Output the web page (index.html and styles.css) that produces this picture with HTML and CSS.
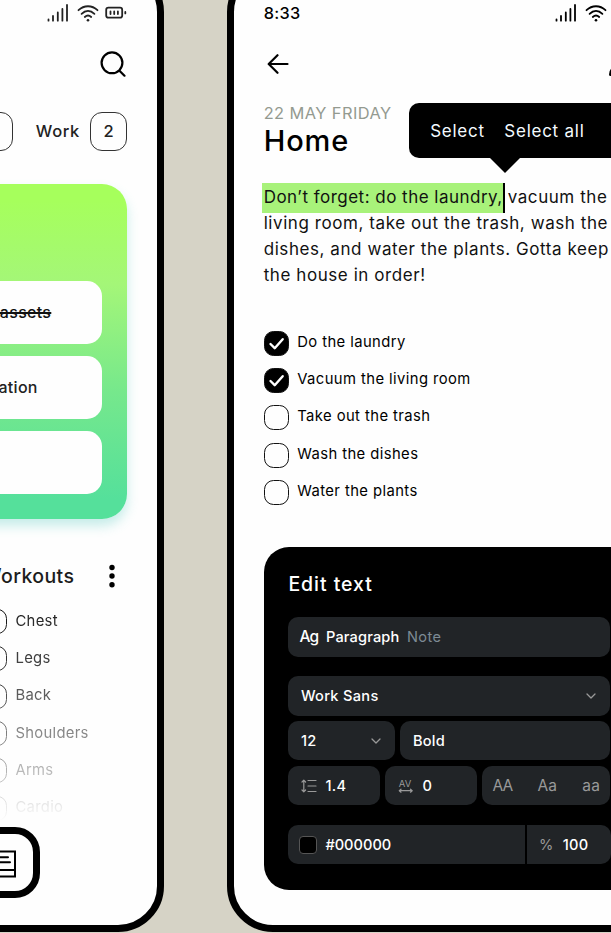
FILE: index.html
```
<!DOCTYPE html>
<html lang="en">
<head>
<meta charset="utf-8">
<title>Notes</title>
<link rel="stylesheet" href="styles.css">
</head>
<body>
<main class="stage">
  <section class="phone phone-home">
    <div class="status">
      <svg class="signal" viewBox="0 0 22 18"><path d="M1.5 15.5v1.2M6 12v4.7M10.800 8.500v8.200M15.400 5v11.700M20 1v15.700"/></svg>
      <svg class="wifi" viewBox="0 0 22 18"><path d="M1.5 6.2C7 .9 15 .9 20.500 6.200M4.600 9.800C8.500 6 13.500 6 17.400 9.800M7.800 13C9.800 11.200 12.200 11.200 14.200 13"/><circle cx="11" cy="16.200" r="1.300"/></svg>
      <svg class="battery" viewBox="0 0 22 18"><rect x="1.200" y="3.700" width="16" height="10" rx="2.200"/><path d="M5.500 7.500v2.500M9.200 7.500v2.500M12.900 7.500v2.500M20.300 8v1.400"/></svg>
    </div>
    <div class="toolbar toolbar-end">
      <svg class="search" viewBox="0 0 26 26"><circle cx="12" cy="11.800" r="10.400"/><path d="M19.500 19.700l5 5"/></svg>
    </div>
    <div class="tabs">
      <span class="badge"></span>
      <span class="tab-name">Work</span>
      <span class="badge">2</span>
    </div>
    <div class="card">
      <div class="card-item done"><span>assets</span></div>
      <div class="card-item next"><span>ation</span></div>
      <div class="card-item"></div>
    </div>
    <div class="list-head"><h2>Workouts</h2>
      <svg class="dots" viewBox="0 0 6 26"><circle cx="3" cy="4.500" r="2.700"/><circle cx="3" cy="13" r="2.700"/><circle cx="3" cy="21.700" r="2.700"/></svg>
    </div>
    <ul class="checks checks-fade">
      <li><i class="box"></i><span>Chest</span></li>
      <li><i class="box"></i><span>Legs</span></li>
      <li><i class="box"></i><span>Back</span></li>
      <li><i class="box"></i><span>Shoulders</span></li>
      <li><i class="box"></i><span>Arms</span></li>
      <li><i class="box"></i><span>Cardio</span></li>
    </ul>
    <div class="nav">
      <svg class="news" viewBox="0 0 34 28"><path d="M1 1.500h31v25H1zM1 20h31M8 7.200h17M8 12.300h19"/></svg>
    </div>
  </section>

  <section class="phone phone-note">
    <div class="status status-note">
      <span class="clock">8:33</span>
      <svg class="signal" viewBox="0 0 22 18"><path d="M1.500 15.500v1.200M6 12v4.700M10.800 8.500v8.200M15.400 5v11.700M20 1v15.700"/></svg>
      <svg class="wifi" viewBox="0 0 22 18"><path d="M1.500 6.200C7 .9 15 .9 20.500 6.200M4.600 9.800C8.500 6 13.500 6 17.400 9.800M7.800 13C9.800 11.200 12.200 11.200 14.200 13"/><circle cx="11" cy="16.200" r="1.300"/></svg>
    </div>
    <div class="toolbar">
      <svg class="back" viewBox="0 0 22 20"><path d="M20.500 10H2M10.500 1.200L1.700 10l8.800 8.800"/></svg>
      <svg class="person" viewBox="0 0 10 12"><path d="M1.500 9.500C1.500 6 4 3 9 2"/></svg>
    </div>
    <p class="date">22 MAY FRIDAY</p>
    <h1>Home</h1>
    <div class="popover"><span>Select</span><span>Select all</span></div>
    <p class="note">
      <span class="line"><mark>Don’t forget: do the laundry,</mark><span class="rest">vacuum the</span></span>
      <span class="line">living room, take out the trash, wash the</span>
      <span class="line">dishes, and water the plants. Gotta keep</span>
      <span class="line">the house in order!</span>
    </p>
    <ul class="checks checks-note">
      <li><i class="box on"><svg viewBox="0 0 25 25"><path d="M6.500 13l4.200 4.200 8-9"/></svg></i><span>Do the laundry</span></li>
      <li><i class="box on"><svg viewBox="0 0 25 25"><path d="M6.500 13l4.200 4.200 8-9"/></svg></i><span>Vacuum the living room</span></li>
      <li><i class="box"></i><span>Take out the trash</span></li>
      <li><i class="box"></i><span>Wash the dishes</span></li>
      <li><i class="box"></i><span>Water the plants</span></li>
    </ul>
    <div class="panel">
      <h2>Edit text</h2>
      <div class="field style"><span class="ag">Ag</span><span class="para">Paragraph</span><span class="dim">Note</span></div>
      <div class="rows">
        <div class="field"><span>Work Sans</span><svg class="chev" viewBox="0 0 10 6"><path d="M1 1l4 4 4-4"/></svg></div>
        <div class="row two">
          <div class="field"><span>12</span><svg class="chev" viewBox="0 0 10 6"><path d="M1 1l4 4 4-4"/></svg></div>
          <div class="field"><span>Bold</span></div>
        </div>
        <div class="row three">
          <div class="field metric"><svg class="leading" viewBox="0 0 16 14"><path d="M2.800 1.500v11M1 3l1.800-1.800L4.600 3M1 11l1.800 1.800L4.600 11M7 1.500h8M7 7h8M7 12.500h8"/></svg><span>1.4</span></div>
          <div class="field metric"><svg class="tracking" viewBox="0 0 16 14"><text x="0.800" y="8">AV</text><path d="M1.500 11.700h12.500M3 10.200l-1.700 1.500L3 13.200M12.500 10.200l1.700 1.500L12.500 13.200"/></svg><span>0</span></div>
          <div class="field cases"><span class="upper">AA</span><span>Aa</span><span>aa</span></div>
        </div>
      </div>
      <div class="row color">
        <div class="field hex"><i class="swatch"></i><span>#000000</span></div>
        <div class="field alpha"><span class="pct">%</span><span>100</span></div>
      </div>
    </div>
  </section>
</main>
</body>
</html>
```

FILE: styles.css
```
* { box-sizing: border-box; margin: 0; padding: 0; }
html { overflow: hidden; }
body {
  width: 611px;
  height: 933px;
  overflow: hidden;
  background: #d6d3c6;
  color: #000;
  font-family: Inter, "Liberation Sans", sans-serif;
}
h1, h2 { font-weight: 500; }
ul { list-style: none; }
svg { display: block; flex: none; fill: none; stroke: currentColor; stroke-linecap: round; stroke-linejoin: round; }
span { white-space: nowrap; }

.stage { display: flex; gap: 62.400px; width: 611px; height: 933px; overflow: hidden; }
.phone {
  flex: none;
  height: 965.500px;
  margin-top: -34px;
  padding-top: 27px;
  border: 7px solid #000;
  border-radius: 46px;
  background: #fefefe;
}
.phone-home { width: 224.300px; margin-left: -60px; padding-left: 33px; padding-right: 30px; }
.phone-note { width: 460px; padding-left: 30px; position: relative; }

.status { display: flex; justify-content: flex-end; align-items: center; height: 26.500px; color: #222; }
.status svg { width: 22px; height: 18px; stroke-width: 1.800; }
.status .signal { margin-right: 8px; }
.wifi circle { fill: currentColor; stroke: none; }
.phone-home .wifi { margin-right: 6.500px; }
.status-note { justify-content: flex-start; color: #000; }
.clock { width: 291.500px; font-size: 16.300px; letter-spacing: .3px; font-weight: 500; }
.toolbar { display: flex; align-items: center; height: 47px; margin-top: 13.500px; }
.toolbar-end { justify-content: flex-end; padding-right: 1.500px; }
.search { width: 26px; height: 26px; stroke-width: 2.200; }
.back { width: 22px; height: 20px; margin-left: 3px; stroke-width: 2.200; }
.person { width: 10px; height: 12px; margin-left: 320px; margin-top: 15px; stroke-width: 3; }

.tabs { display: flex; align-items: center; justify-content: flex-end; margin-top: 25px; height: 38.500px; color: #222; font-weight: 500; font-size: 16.500px; }
.badge { display: flex; align-items: center; justify-content: center; width: 37.500px; height: 38.500px; border: 1.300px solid #333; border-radius: 12px; flex: none; }
.tab-name { margin: 0 10px 0 23px; width: 44px; letter-spacing: .65px; }

.card {
  display: flex;
  flex-direction: column;
  gap: 12.300px;
  height: 334.500px;
  margin-top: 33.500px;
  margin-left: -20px;
  padding: 97px 25px 0 0;
  border-radius: 25px;
  background: linear-gradient(#a6ff5c 5%, #a4f678 30%, #76e88c 62%, #55e09b 94%);
  box-shadow: 0 7px 12px rgba(80, 200, 190, .32);
}
.card-item { display: flex; align-items: center; justify-content: flex-end; height: 62.700px; border-radius: 15px; background: #fefefe; font-size: 16px; font-weight: 500; letter-spacing: .3px; color: #222; flex: none; }
.done { padding-right: 51px; color: #111; }
.done span { text-decoration: line-through; text-decoration-thickness: 2px; }
.next { padding-right: 64.500px; }

.list-head { display: flex; justify-content: space-between; align-items: center; height: 30px; margin-top: 42px; padding-right: 12px; }
.list-head h2 { margin-left: 2px; font-size: 19.500px; letter-spacing: .4px; color: #1c1c1c; }
.dots { width: 6px; height: 26px; fill: #000; stroke: none; }

.checks { display: flex; flex-direction: column; gap: 12.100px; font-size: 14.800px; letter-spacing: .42px; }
.checks li { display: flex; align-items: center; gap: 8.500px; height: 25.200px; }
.checks li span { position: relative; top: -1.500px; }
.box { display: block; width: 25px; height: 25px; border: 1.300px solid #111; border-radius: 9.500px; flex: none; }
.on { background: #000; }
.on svg { width: 25px; height: 25px; margin: -1px; stroke: #fff; stroke-width: 2.400; }
.checks-fade {
  margin: 18.500px 0 0 2px;
  letter-spacing: .3px;
  color: #222;
  mask-image: linear-gradient(#000 0, rgba(0,0,0,.8) 35%, rgba(0,0,0,.5) 62%, rgba(0,0,0,0) 100%);
}
.checks-fade li span { top: -.7px; }
.checks-note { margin-top: 42.900px; }

.nav { display: flex; justify-content: flex-end; align-items: center; width: 79.500px; height: 70.500px; margin: 6.800px 0 0 -20px; padding-right: 15.500px; border: 7px solid #000; border-radius: 25px; }
.news { width: 34px; height: 28px; stroke-width: 2; stroke-linejoin: miter; margin-top: 3px; }

.date { height: 20px; margin-top: 17px; line-height: 19px; font-size: 16.400px; letter-spacing: .42px; color: #949a90; }
h1 { height: 34px; line-height: 34px; font-size: 29px; letter-spacing: .9px; }
.popover {
  position: absolute;
  left: 175px;
  top: 130px;
  display: flex;
  gap: 19.500px;
  width: 250px;
  height: 55px;
  padding: 1px 0 0 21.500px;
  align-items: center;
  border-radius: 10px;
  background: #000;
  color: #f4fbff;
  font-size: 17px;
  letter-spacing: .75px;
}
.popover::after { content: ""; position: absolute; left: 80px; top: 54px; border: 16px solid transparent; border-top-color: #000; border-bottom: 0; }

.note { margin-top: 25.800px; font-size: 17px; line-height: 26px; letter-spacing: .57px; color: #111; }
.line { display: flex; height: 26px; }
mark { flex: none; height: 30px; width: 243.500px; margin: -1px 0 0 -2px; padding: 1px 0 0 2px; background: #a8f27a; color: #111; border-right: 2.500px solid #000; letter-spacing: .48px; white-space: nowrap; }
.rest { margin-left: 2.500px; }

.panel { width: 380px; height: 342.500px; margin-top: 42px; padding: 25px 0 0 24.700px; border-radius: 25px; background: #000; color: #fff; font-size: 14.600px; font-weight: 500; letter-spacing: .3px; }
.panel h2 { height: 24px; line-height: 24px; font-size: 19.500px; letter-spacing: .95px; }
.field { display: flex; align-items: center; height: 39.500px; padding: 0 12.500px; border-radius: 10px; background: #212427; }
.style { width: 322px; margin-top: 21px; padding-left: 11px; gap: 7.500px; }
.ag { font-size: 15.500px; letter-spacing: -.7px; }
.para { letter-spacing: .15px; }
.dim { color: #7d8a94; font-weight: 400; letter-spacing: .4px; }
.rows { display: flex; flex-direction: column; gap: 5.300px; width: 322px; margin-top: 19.700px; }
.chev { width: 10px; height: 6px; margin-left: auto; color: #999; stroke-width: 1.300; margin-right: 2px; }
.row { display: grid; }
.two { grid-template-columns: 107px 1fr; gap: 5px; }
.three { grid-template-columns: 92px 92px 1fr; gap: 5px; }
.metric { gap: 8.500px; }
.leading, .tracking { width: 16px; height: 14px; color: #999; stroke-width: 1.200; }
.tracking text { font-size: 9.500px; font-weight: 400; letter-spacing: 0; fill: currentColor; stroke: none; }
.cases { justify-content: space-between; padding: 0 10px; font-size: 15.500px; font-weight: 400; letter-spacing: .3px; color: #999; }
.upper { letter-spacing: -.8px; }
.color { grid-template-columns: 237px 84px; gap: 1.200px; margin-top: 19.700px; width: 322px; }
.hex { border-radius: 10px 0 0 10px; padding-left: 11px; gap: 8px; letter-spacing: 0; }
.swatch { width: 18px; height: 18px; border: 1px solid #555; border-radius: 4px; background: #000; }
.alpha { border-radius: 0 10px 10px 0; gap: 9px; }
.pct { color: #999; font-weight: 400; }
```
